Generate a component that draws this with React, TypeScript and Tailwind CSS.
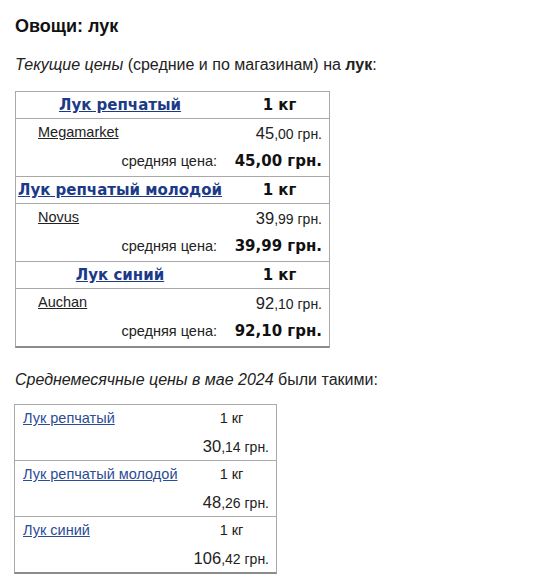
const arial = "font-['Liberation_Sans',Arial,sans-serif]";
const verdana = "font-['DejaVu_Sans',Verdana,sans-serif]";

type Item = { name: string; store: string; rub: string; kop: string };

const current: Item[] = [
  { name: "Лук репчатый", store: "Megamarket", rub: "45", kop: "00" },
  { name: "Лук репчатый молодой", store: "Novus", rub: "39", kop: "99" },
  { name: "Лук синий", store: "Auchan", rub: "92", kop: "10" },
];

const monthly = [
  { name: "Лук репчатый", rub: "30", kop: "14" },
  { name: "Лук репчатый молодой", rub: "48", kop: "26" },
  { name: "Лук синий", rub: "106", kop: "42" },
];

function Price({ rub, kop }: { rub: string; kop: string }) {
  return (
    <span className={`${arial} text-[#222]`}>
      <span className="text-[16.5px]">{rub}</span>
      <span className="text-[14px]">,{kop} грн.</span>
    </span>
  );
}

function CurrentGroup({ item, last }: { item: Item; last: boolean }) {
  return (
    <div className={last ? "" : "border-b border-[#a9a9a9]"}>
      <div className="grid h-[27px] grid-cols-[214px_1fr] items-center border-b border-[#a9a9a9]">
        <a href="#" className={`${verdana} pr-[6px] text-center text-[15px] font-bold text-[#1b3a87] underline`}>
          {item.name}
        </a>
        <span className={`${verdana} text-center text-[15px] font-bold text-[#111]`}>1 кг</span>
      </div>
      <div className="grid h-[28px] grid-cols-[214px_1fr] items-center">
        <a href="#" className={`${arial} pl-[22px] text-[14.5px] text-[#222] underline`}>
          {item.store}
        </a>
        <div className="pr-[7px] text-right">
          <Price rub={item.rub} kop={item.kop} />
        </div>
      </div>
      <div className="grid h-[29px] grid-cols-[214px_1fr] items-center">
        <span className={`${arial} pr-[13px] text-right text-[14.5px] text-[#222]`}>средняя цена:</span>
        <span className={`${verdana} pr-[7px] text-right text-[15px] font-bold text-[#111]`}>
          {item.rub},{item.kop} грн.
        </span>
      </div>
    </div>
  );
}

export default function App() {
  return (
    <div className={`${arial} min-h-[585px] bg-white pl-[15px] pt-[15px] text-[#222]`}>
      <h1 className="text-[18px] font-bold leading-[22px] text-[#111]">Овощи: лук</h1>
      <p className="mt-[19px] text-[16px] leading-[18px]">
        <i>Текущие цены</i> (средние и по магазинам) на <b>лук</b>:
      </p>
      <div className="mt-[17px] w-[315px] border border-b-2 border-[#a9a9a9] border-b-[#8c8c8c]">
        {current.map((item, i) => (
          <CurrentGroup key={item.name} item={item} last={i === current.length - 1} />
        ))}
      </div>
      <p className="mt-[23px] text-[16px] italic leading-[18px]">
        Среднемесячные цены в мае 2024 <span className="not-italic">были такими:</span>
      </p>
      <div className="mt-[15px] w-[263px] -ml-px border border-b-2 border-[#a9a9a9] border-b-[#8c8c8c]">
        {monthly.map((m, i) => (
          <div key={m.name} className={i === monthly.length - 1 ? "" : "border-b border-[#a9a9a9]"}>
            <div className="grid h-[28px] grid-cols-[176px_1fr] items-center">
              <a href="#" className="pl-[8px] text-[14.5px] text-[#2b4c95] underline">
                {m.name}
              </a>
              <span className="pr-[4px] text-center text-[14.5px] text-[#222]">1 кг</span>
            </div>
            <div className="flex h-[27px] items-center justify-end pr-[7px]">
              <Price rub={m.rub} kop={m.kop} />
            </div>
          </div>
        ))}
      </div>
    </div>
  );
}
